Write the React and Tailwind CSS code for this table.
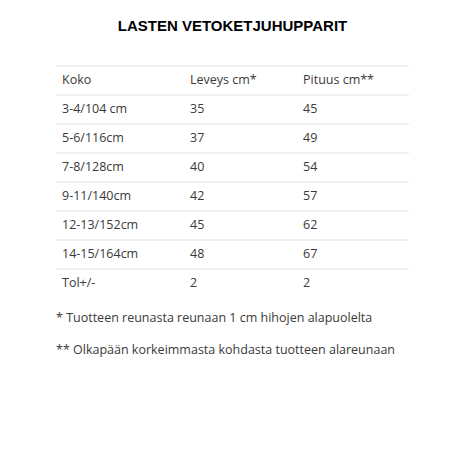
import React from 'react';

const rows = [
  ['Koko', 'Leveys cm*', 'Pituus cm**'],
  ['3-4/104 cm', '35', '45'],
  ['5-6/116cm', '37', '49'],
  ['7-8/128cm', '40', '54'],
  ['9-11/140cm', '42', '57'],
  ['12-13/152cm', '45', '62'],
  ['14-15/164cm', '48', '67'],
  ['Tol+/-', '2', '2'],
];

export default function App() {
  return (
    <div className="w-[465px] h-[465px] bg-white overflow-hidden">
      <h1 className="pt-[16px] text-center text-[15px] font-bold text-black leading-5 font-['Liberation_Sans',Arial,sans-serif]">
        LASTEN VETOKETJUHUPPARIT
      </h1>
      <div className="mt-[29px] ml-[56px] w-[353px] font-['Open_Sans',sans-serif] text-[12.5px] text-[#3a3a3a]">
        {rows.map((r, i) => (
          <div
            key={i}
            className="grid grid-cols-[128px_113px_1fr] h-[29px] items-center border-t-2 border-[#f0f0f0] pl-[6px]"
          >
            <span>{r[0]}</span>
            <span>{r[1]}</span>
            <span>{r[2]}</span>
          </div>
        ))}
        <p className="mt-[12px]">* Tuotteen reunasta reunaan 1 cm hihojen alapuolelta</p>
        <p className="mt-[13px]">** Olkapään korkeimmasta kohdasta tuotteen alareunaan</p>
      </div>
    </div>
  );
}
